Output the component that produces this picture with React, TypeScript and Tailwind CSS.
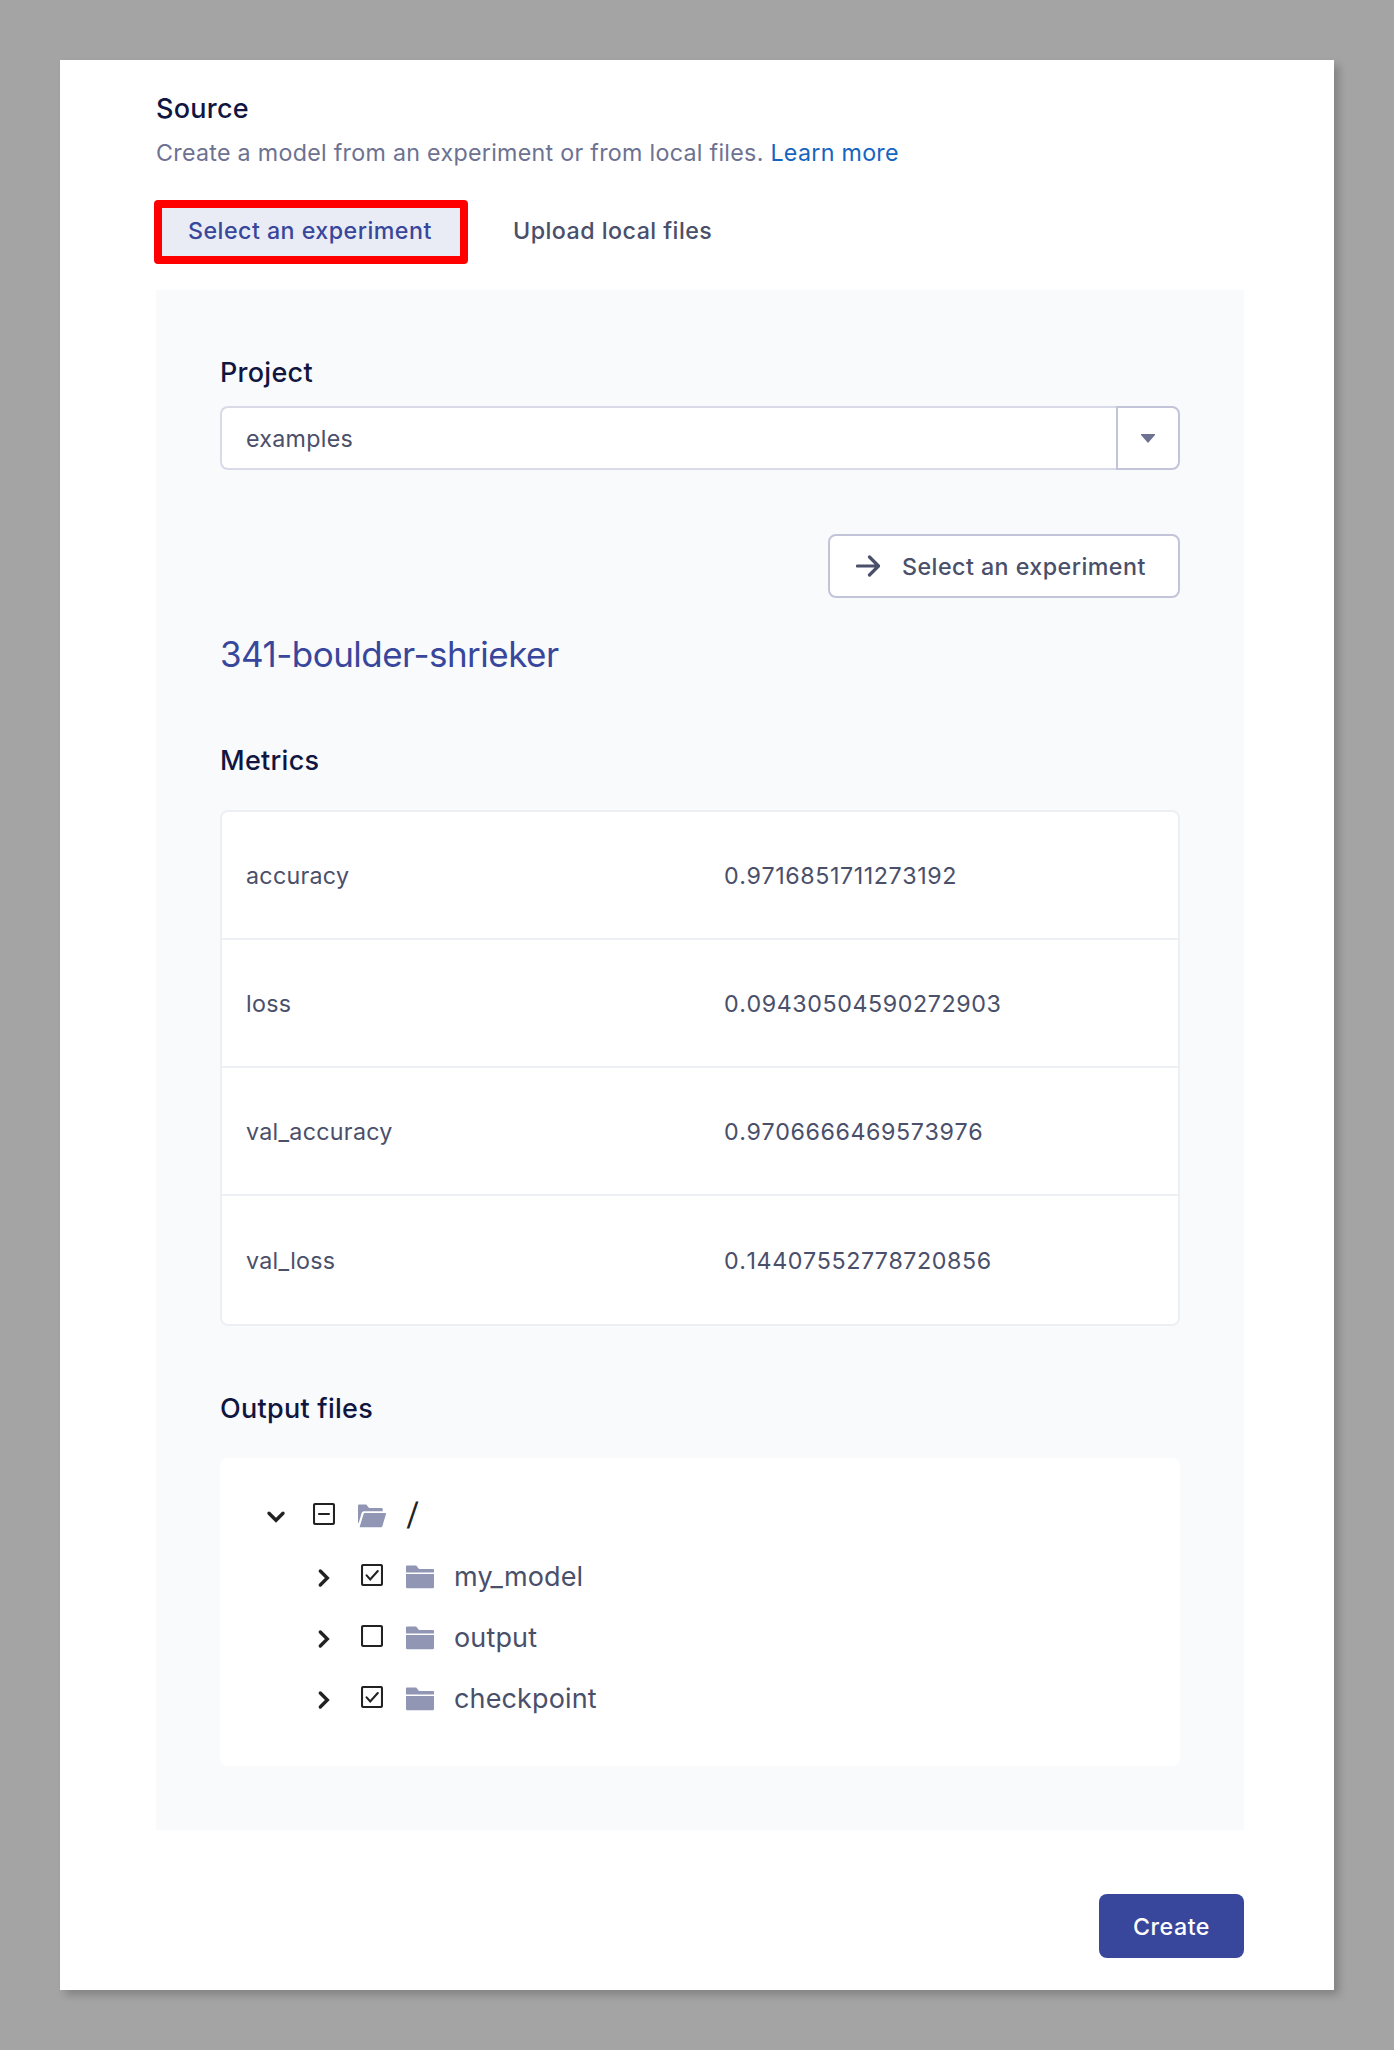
import type { ReactNode } from "react";

const metrics = [
  { name: "accuracy", value: "0.9716851711273192" },
  { name: "loss", value: "0.09430504590272903" },
  { name: "val_accuracy", value: "0.9706666469573976" },
  { name: "val_loss", value: "0.14407552778720856" },
];

type CheckState = "checked" | "unchecked" | "mixed";

const folders: { name: string; state: CheckState }[] = [
  { name: "my_model", state: "checked" },
  { name: "output", state: "unchecked" },
  { name: "checkpoint", state: "checked" },
];

function Heading({ children }: { children: ReactNode }) {
  return <h2 className="h-10 pt-px text-[27px] leading-10 font-[480] tracking-[0.27px] text-[#10163f]">{children}</h2>;
}

function Chevron({ open }: { open?: boolean }) {
  return (
    <svg className="size-6 shrink-0" viewBox="0 0 24 24" fill="none" stroke="#222222" strokeWidth="3.4" strokeLinecap="round" strokeLinejoin="miter">
      {open ? <path d="M5 9.3l7 7 7-7" /> : <path d="M8.3 6l7 7-7 7" />}
    </svg>
  );
}

function Checkbox({ state }: { state: CheckState }) {
  return (
    <svg className="size-[22px] shrink-0" viewBox="0 0 22 22" fill="none" stroke="#222222" strokeWidth="2.1" strokeLinecap="round">
      <rect x="1" y="1" width="20" height="20" rx="1.5" />
      {state === "checked" && <path d="M5.6 11.4l3.6 4 7.6-8.4" />}
      {state === "mixed" && <path d="M6 11h10" />}
    </svg>
  );
}

function FolderIcon() {
  return (
    <svg className="h-6 w-7 shrink-0" viewBox="0 0 28 24" fill="#9096b3">
      <path d="M1 .5h9.2L13 4h14a1 1 0 0 1 1 1v2.6H0V1.5a1 1 0 0 1 1-1z" />
      <path d="M0 9h28v13a1.3 1.3 0 0 1-1.3 1.3H1.3A1.3 1.3 0 0 1 0 22z" />
    </svg>
  );
}

function FolderOpenIcon() {
  return (
    <svg className="h-6 w-7 shrink-0" viewBox="0 0 28 24" fill="#9096b3">
      <path d="M1 .5h7.3L11 4h12.7a1 1 0 0 1 1 1v2.2H5.8a2.2 2.2 0 0 0-2.1 1.5L.7 19 0 18.8V1.5a1 1 0 0 1 1-1z" />
      <path d="M6.8 9h20.4a.8.8 0 0 1 .8 1.1l-3.7 12.2a1.4 1.4 0 0 1-1.3 1H2.8a.9.9 0 0 1-.9-1.2L5.6 9.9A1.3 1.3 0 0 1 6.8 9z" />
    </svg>
  );
}

export default function App() {
  return (
    <div className="h-[2050px] w-[1394px] bg-[#a4a4a4] p-[60px] font-['Inter',sans-serif] text-[23.25px] leading-8 tracking-[0.28px] text-[#4a4f6a]">
      <main className="flex h-[1930px] flex-col bg-white pt-7 pr-[90px] pb-8 pl-24 shadow-[5px_5px_8px_rgba(0,0,0,0.2)]">
        <Heading>Source</Heading>
        <p className="mt-[9px] h-[31px] text-[#6d7291]">
          Create a model from an experiment or from local files.{" "}
          <a className="text-[#1565c0]">Learn more</a>
        </p>

        <div className="mt-8 -ml-0.5 flex h-16 font-[480] tracking-[0.46px]">
          <button className="flex w-[314px] items-center rounded-[4px] border-8 border-[#ff0000] bg-[#eaecf5] pb-0.5 pl-[26px] text-[#38479b]">
            Select an experiment
          </button>
          <button className="ml-[45px] pb-0.5">Upload local files</button>
        </div>

        <section className="mt-[26px] flex h-[1540px] flex-col bg-[#f9fafc] px-16 pt-[62px]">
          <Heading>Project</Heading>
          <div className="mt-3.5 flex h-16">
            <div className="flex flex-1 items-center rounded-l-lg border-2 border-r-0 border-[#d9dae8] bg-white pt-0.5 pl-6">examples</div>
            <button className="flex w-16 items-center justify-center rounded-r-lg border-2 border-[#c2c4d9] bg-white">
              <svg className="h-[9px] w-3.5" viewBox="0 0 14 9" fill="#6d7291">
                <path d="M0 0h14v1L7 9 0 1z" />
              </svg>
            </button>
          </div>

          <button className="mt-16 flex h-16 w-[352px] items-center self-end rounded-lg border-2 border-[#c2c4d9] bg-white pl-[26px] font-[480] tracking-[0.46px]">
            <svg className="h-6 w-6" viewBox="0 0 24 24" fill="none" stroke="#4a4f6a" strokeWidth="3.2" strokeLinecap="round" strokeLinejoin="round">
              <path d="M1.5 12h20.5M13.5 3l9 9-9 9" />
            </svg>
            <span className="ml-[22px] pt-0.5">Select an experiment</span>
          </button>

          <a className="mt-8 text-[35px] leading-[48px] tracking-[-0.52px] text-[#38479b]">341-boulder-shrieker</a>

          <div className="mt-[62px]">
            <Heading>Metrics</Heading>
          </div>
          <dl className="mt-[30px] h-[516px] divide-y-2 divide-[#eceff4] rounded-lg border-2 border-[#eceff4] bg-white">
            {metrics.map((m) => (
              <div key={m.name} className="grid h-32 grid-cols-[478px_1fr] items-center px-6 pt-0.5">
                <dt>{m.name}</dt>
                <dd className="tracking-[0.58px] [font-kerning:none]">{m.value}</dd>
              </div>
            ))}
          </dl>

          <div className="mt-[62px]">
            <Heading>Output files</Heading>
          </div>
          <div className="mt-[30px] flex h-[308px] flex-col rounded-lg bg-white pt-[27px] pl-11 text-[27px] tracking-[0.14px]">
            <div className="flex h-[61px] items-center">
              <Chevron open />
              <span className="mb-1 ml-[25px]">
                <Checkbox state="mixed" />
              </span>
              <span className="ml-[23px]">
                <FolderOpenIcon />
              </span>
              <span className="mb-1 ml-[21px] -skew-x-4 text-[31px] text-[#222222]">/</span>
            </div>
            {folders.map((f) => (
              <div key={f.name} className="flex h-[61px] items-center pl-12">
                <Chevron />
                <span className="mb-1 ml-[25px]">
                  <Checkbox state={f.state} />
                </span>
                <span className="ml-[23px]">
                  <FolderIcon />
                </span>
                <span className="ml-5">{f.name}</span>
              </div>
            ))}
          </div>
        </section>

        <button className="mt-16 h-16 w-[145px] self-end rounded-lg bg-[#38479b] pt-0.5 font-[480] tracking-[0.5px] text-white">Create</button>
      </main>
    </div>
  );
}
